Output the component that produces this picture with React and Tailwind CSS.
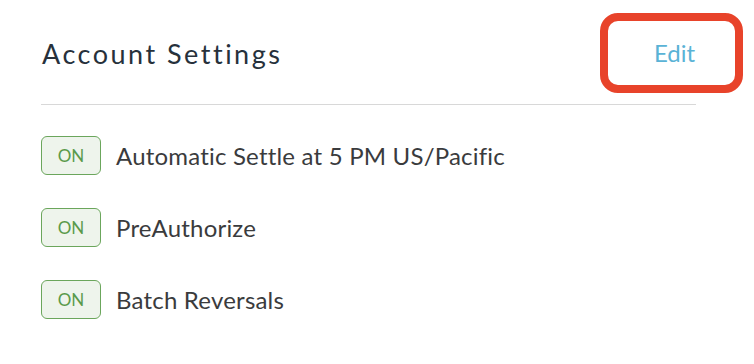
import React from "react";

const settings = [
  "Automatic Settle at 5 PM US/Pacific",
  "PreAuthorize",
  "Batch Reversals",
];

export default function App() {
  return (
    <div className="min-h-screen bg-white pl-[41px] pt-[13px] font-['Lato','Liberation_Sans',sans-serif]">
      {/* HEADER */}
      <div className="flex w-[702px] items-center justify-between">
        <h2 className="pl-px text-[27px] leading-none tracking-[2.5px] text-[#27313b]">
          Account Settings
        </h2>
        <button className="h-[80px] w-[143px] rounded-[18px] border-[8px] border-[#e8432a] pl-[6px] text-[24px] text-[#5ab3d6]">
          Edit
        </button>
      </div>

      <div className="mt-[11px] h-px w-[655px] bg-[#d8d8d8]" />

      {/* SETTINGS */}
      <ul className="mt-[31px] flex flex-col gap-[33px]">
        {settings.map((s) => (
          <li key={s} className="flex items-center">
            <span className="flex h-[39px] w-[60px] items-center justify-center rounded-[6px] border border-[#6ba65c] bg-[#eef4ec] text-[17px] text-[#5a9a4b]">
              ON
            </span>
            <span className="ml-[15px] text-[24px] tracking-[0.2px] text-[#3a3b3d]">
              {s}
            </span>
          </li>
        ))}
      </ul>
    </div>
  );
}
